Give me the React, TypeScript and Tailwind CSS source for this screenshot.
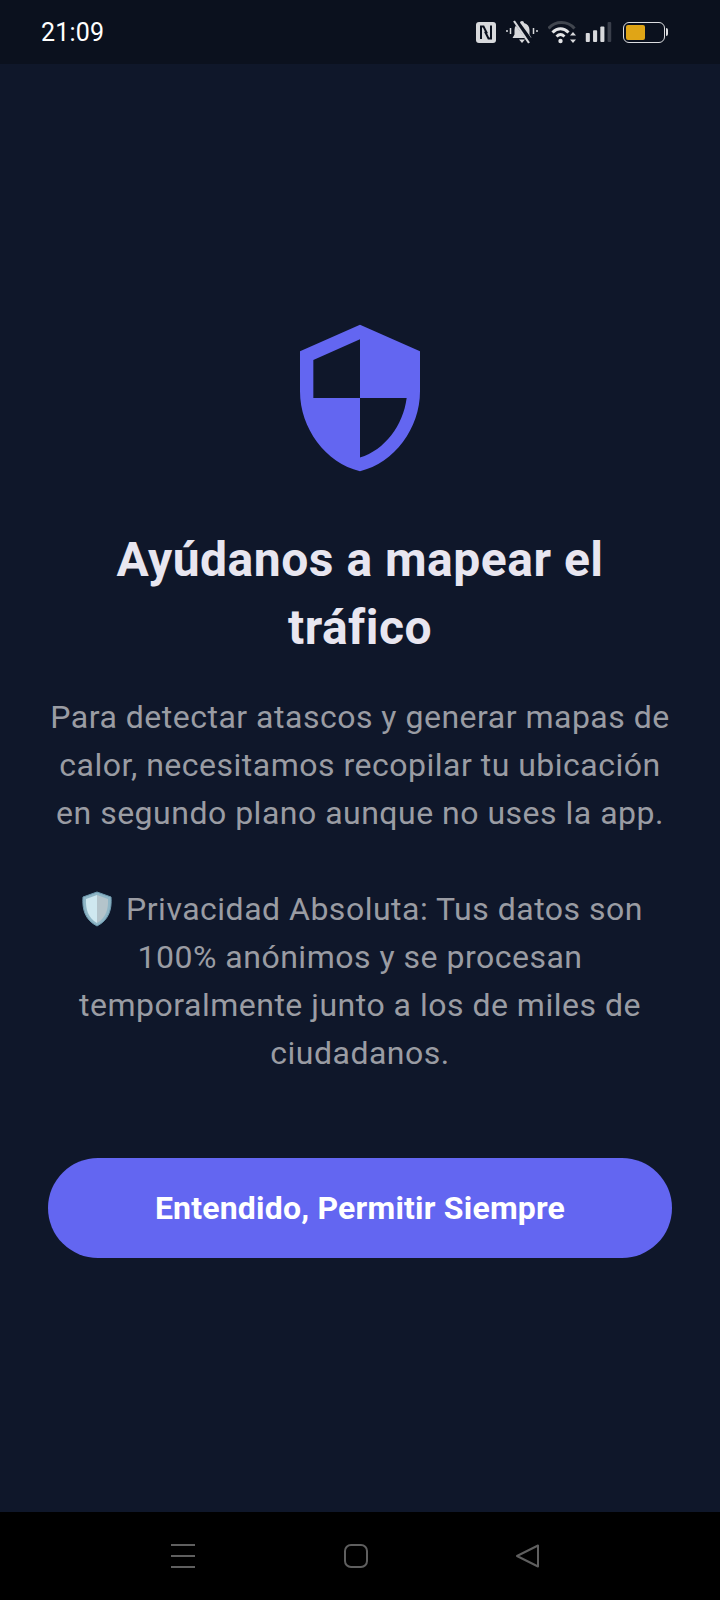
function StatusIcons() {
  return (
    <div className="flex items-center">
      <svg width="20" height="21" viewBox="0 0 20 21" className="mr-[10px]">
        <rect x="0" y="0" width="20" height="21" rx="3" fill="#d8d9dc" />
        <path d="M5 17V4.500h2.500l3.500 7M15 3.500v13h-2.500L9 9.500" fill="none" stroke="#0b111e" strokeWidth="2" />
      </svg>
      <svg width="32" height="24" viewBox="0 0 32 24" className="mr-[10px]">
        <path d="M16 1c1.200 0 2 .8 2 2 3.500 1 5.500 3.500 5.500 7v4.500l2 3.500h-19l2-3.500V10c0-3.500 2-6 5.500-7 0-1.200.8-2 2-2z" fill="#d8d9dc" />
        <path d="M13 19.500h6L16 23z" fill="#d8d9dc" />
        <path d="M9 0l16 22" stroke="#0b111e" strokeWidth="5" />
        <path d="M8 1l15 22" stroke="#d8d9dc" strokeWidth="2.200" />
        <path d="M4.500 8v6M1 10v2M27.500 8v6M31 10v2" stroke="#d8d9dc" strokeWidth="1.500" />
      </svg>
      <svg width="29" height="24" viewBox="0 0 28 24" className="mr-[7px]">
        <path d="M0 8.500C7 .5 19 .5 26 8.500" fill="none" stroke="#41464f" strokeWidth="3" />
        <path d="M4 12.500C9 7.500 15 7.500 20 12.500" fill="none" stroke="#e4e5e7" strokeWidth="3" />
        <path d="M8 16.500c2.500-2.500 5.500-2.500 8 0" fill="none" stroke="#e4e5e7" strokeWidth="2.800" />
        <circle cx="12" cy="21" r="2.200" fill="#e4e5e7" />
        <path d="M24.500 12l3 3.500h-6zM24.500 23l-3-3.500h6z" fill="#d8d9dc" />
      </svg>
      <svg width="29" height="20" viewBox="0 0 28 22" className="mr-[10px]">
        <rect x="0" y="12" width="4.500" height="10" rx="1" fill="#d8d9dc" />
        <rect x="8" y="9" width="4.500" height="13" rx="1" fill="#d8d9dc" />
        <rect x="16" y="5" width="4.500" height="17" rx="1" fill="#d8d9dc" />
        <rect x="24" y="0" width="4" height="22" rx="1" fill="#3a3f4b" />
      </svg>
      <div className="flex items-center">
        <div className="flex h-[21px] w-[42px] items-center rounded-[6px] border-[1.500px] border-[#dcdde0] p-[2px]">
          <div className="h-full w-[19px] rounded-[2px] bg-[#e0a516]" />
        </div>
        <div className="ml-[1px] h-[8px] w-[2px] rounded-r bg-[#dcdde0]" />
      </div>
    </div>
  );
}

function EmojiShield() {
  return (
    <svg width="32" height="36" viewBox="0 0 32 36" className="mr-[13px] ml-[4px] inline-block align-[-7px]">
      <path d="M16 1l14 5c1 12-2 23-14 29C4 29 1 18 2 6z" fill="#8fb6c6" stroke="#6f9bb0" strokeWidth="1" />
      <path d="M16 4L5 8c-.500 10 2 19 11 24z" fill="#cfe8f0" />
      <path d="M16 4l11 4c.500 10-2 19-11 24z" fill="#b4c4cb" />
    </svg>
  );
}

export default function App() {
  return (
    <div className="flex h-[1600px] w-[720px] flex-col bg-[#0f172a] font-['Roboto',sans-serif]">
      <div className="flex h-16 items-center justify-between bg-[#0b111e] pr-[52px] pl-[41px]">
        <span className="text-[25px] leading-none font-[450] tracking-[0.2px] text-white">21:09</span>
        <StatusIcons />
      </div>

      <main className="flex flex-1 flex-col items-center justify-center px-12">
        <svg width="160" height="160" viewBox="0 0 24 24" fill="#6366f1">
          <path d="M12 1L3 5v6c0 5.550 3.840 10.740 9 12 5.160-1.260 9-6.450 9-12V5l-9-4zm0 10.990h7c-.530 4.120-3.280 7.790-7 8.940V12H5V6.300l7-3.110v8.800z" />
        </svg>
        <h1 className="mt-[48px] text-center text-[48px] leading-[68px] font-bold tracking-[0.5px] text-[#e8e6f0]">
          Ayúdanos a mapear el tráfico
        </h1>
        <p className="mt-[31px] text-center text-[32px] leading-[48px] tracking-[0.5px] text-[#9a9ca3]">
          Para detectar atascos y generar mapas de calor, necesitamos recopilar tu ubicación en segundo plano aunque no uses la app.
          <br />
          <br />
          <EmojiShield />
          Privacidad Absoluta: Tus datos son 100% anónimos y se procesan temporalmente junto a los de miles de ciudadanos.
        </p>
        <button className="mt-[81px] h-[100px] w-full rounded-[50px] bg-[#6366f1] text-[32px] font-bold tracking-[0.2px] text-white">
          Entendido, Permitir Siempre
        </button>
      </main>

      <div className="flex h-[88px] items-center bg-black">
        <div className="flex w-full items-center justify-between pr-[180px] pl-[171px]">
          <svg width="24" height="24" viewBox="0 0 24 24" stroke="#5f5f5f" strokeWidth="2">
            <path d="M0 1h24M0 12h24M0 23h24" />
          </svg>
          <svg width="24" height="24" viewBox="0 0 24 24" fill="none" stroke="#5f5f5f" strokeWidth="2">
            <rect x="1" y="1" width="22" height="22" rx="6" />
          </svg>
          <svg width="24" height="24" viewBox="0 0 24 24" fill="none" stroke="#5f5f5f" strokeWidth="2" strokeLinejoin="round">
            <path d="M22 1.500v21L1 12z" />
          </svg>
        </div>
      </div>
    </div>
  );
}
